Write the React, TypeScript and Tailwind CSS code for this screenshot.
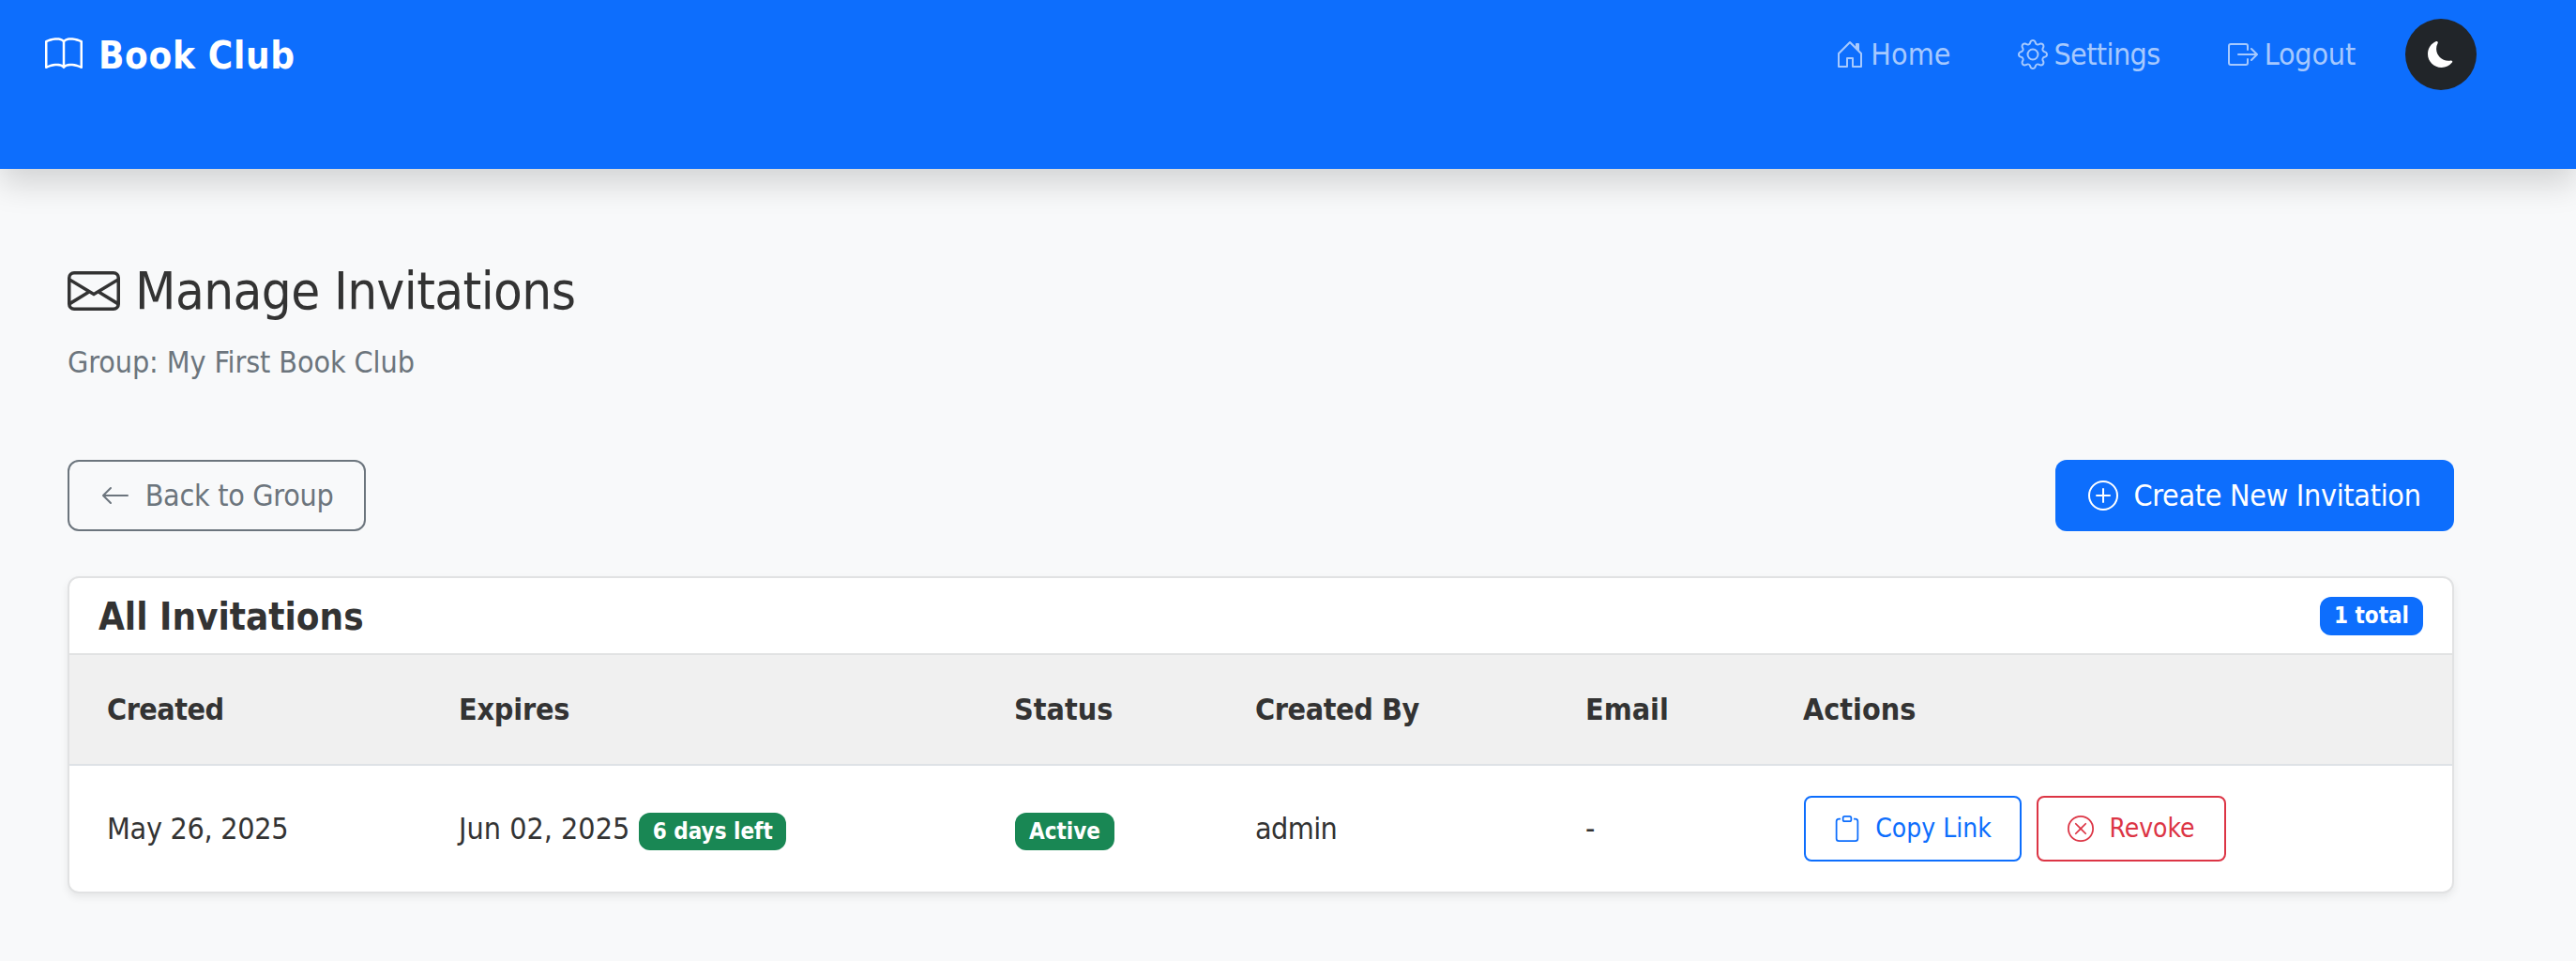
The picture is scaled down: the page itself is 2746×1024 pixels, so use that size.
import { BsArrowLeft, BsBook, BsBoxArrowRight, BsClipboard, BsEnvelope, BsGear, BsHouseDoor, BsMoonFill, BsPlusCircle, BsXCircle } from "react-icons/bs"

const columns = "grid grid-cols-[375px_592px_257px_352px_232px_1fr] items-center pl-10"

function NavLink({ icon, label, className }: { icon: React.ReactNode; label: string; className?: string }) {
    return (
        <a className="flex items-center gap-[6px] text-[32px] leading-[48px] text-[#a6c9fe]">
            {icon}
            <span className={className}>{label}</span>
        </a>
    )
}

export default function App() {
    return (
        <div className="min-h-[1024px] bg-[#f8f9fa] text-[#333333] font-['DejaVu_Sans_Condensed','DejaVu_Sans',sans-serif] [font-stretch:condensed]">
            <nav className="relative flex h-[180px] items-start justify-between bg-[#0d6efd] pl-12 pr-[106px] pt-5 shadow-[0_16px_32px_rgba(0,0,0,0.15)]">
                <a className="mt-3 flex items-center gap-[17px] text-[40px] font-bold leading-[50px] text-white">
                    <BsBook className="h-10 w-10" />
                    <span className="mt-[2px] tracking-[0.7px]">Book Club</span>
                </a>
                <div className="flex items-center">
                    <div className="flex items-center gap-[72px]">
                        <NavLink icon={<BsHouseDoor className="h-8 w-8" />} label="Home" />
                        <NavLink icon={<BsGear className="h-8 w-8" />} label="Settings" className="tracking-[-0.6px]" />
                        <NavLink icon={<BsBoxArrowRight className="h-8 w-8" />} label="Logout" className="ml-px tracking-[-0.2px]" />
                    </div>
                    <button className="ml-[53px] flex h-[76px] w-[76px] items-center justify-center rounded-full bg-[#212529] text-white">
                        <BsMoonFill className="h-7 w-7" />
                    </button>
                </div>
            </nav>

            <main className="pl-[72px] pr-[130px] pt-[96px]">
                <h1 className="flex items-center gap-4 text-[56px] leading-[68px] tracking-[-0.6px]">
                    <BsEnvelope className="h-14 w-14" />
                    <span>Manage Invitations</span>
                </h1>
                <p className="mt-[18px] text-[32px] leading-[48px] tracking-[-0.1px] text-[#6c757d]">Group: My First Book Club</p>

                <div className="mt-[80px] flex items-center justify-between">
                    <a className="flex h-[76px] w-[318px] items-center justify-center gap-4 rounded-xl border-2 border-[#6c757d] text-[32px] tracking-[-0.3px] text-[#6c757d]">
                        <BsArrowLeft className="h-8 w-8" />
                        <span>Back to Group</span>
                    </a>
                    <a className="flex h-[76px] w-[425px] items-center justify-center gap-4 rounded-xl bg-[#0d6efd] text-[32px] tracking-[-0.3px] text-white">
                        <BsPlusCircle className="h-8 w-8" />
                        <span>Create New Invitation</span>
                    </a>
                </div>

                <section className="mt-12 overflow-hidden rounded-xl border-2 border-[#e1e2e3] bg-white shadow-[0_4px_8px_rgba(0,0,0,0.075)]">
                    <header className="flex h-[82px] items-center justify-between border-b-2 border-[#e1e2e3] pl-[31px] pr-[31px]">
                        <h2 className="mt-[2px] text-[40px] font-bold leading-[48px]">All Invitations</h2>
                        <span className="flex h-[41px] w-[110px] items-center justify-center rounded-xl bg-[#0d6efd] text-2xl font-bold text-white">1 total</span>
                    </header>

                    <div className={`${columns} h-[118px] border-b-2 border-[#dee2e6] bg-[#f0f0f0] text-[32px] font-bold`}>
                        <div className="tracking-[-0.5px]">Created</div>
                        <div className="tracking-[-0.2px]">Expires</div>
                        <div>Status</div>
                        <div className="tracking-[-0.4px]">Created By</div>
                        <div>Email</div>
                        <div>Actions</div>
                    </div>

                    <div className={`${columns} h-[134px] text-[32px]`}>
                        <div className="tracking-[-0.3px]">May 26, 2025</div>
                        <div className="flex items-center gap-[10px]">
                            <span>Jun 02, 2025</span>
                            <span className="mt-[6px] flex h-10 w-[157px] items-center justify-center rounded-xl bg-[#198754] text-2xl font-bold text-white">6 days left</span>
                        </div>
                        <div>
                            <span className="ml-px mt-[6px] flex h-10 w-[106px] items-center justify-center rounded-xl bg-[#198754] text-2xl font-bold text-white">Active</span>
                        </div>
                        <div className="tracking-[-0.6px]">admin</div>
                        <div>-</div>
                        <div className="ml-px flex items-center gap-4">
                            <button className="flex h-[70px] w-[232px] items-center justify-center gap-4 rounded-lg border-2 border-[#0d6efd] text-[28px] text-[#0d6efd]">
                                <BsClipboard className="h-7 w-7" />
                                <span>Copy Link</span>
                            </button>
                            <button className="flex h-[70px] w-[202px] items-center justify-center gap-4 rounded-lg border-2 border-[#dc3545] text-[28px] text-[#dc3545]">
                                <BsXCircle className="h-7 w-7" />
                                <span>Revoke</span>
                            </button>
                        </div>
                    </div>
                </section>
            </main>
        </div>
    )
}
